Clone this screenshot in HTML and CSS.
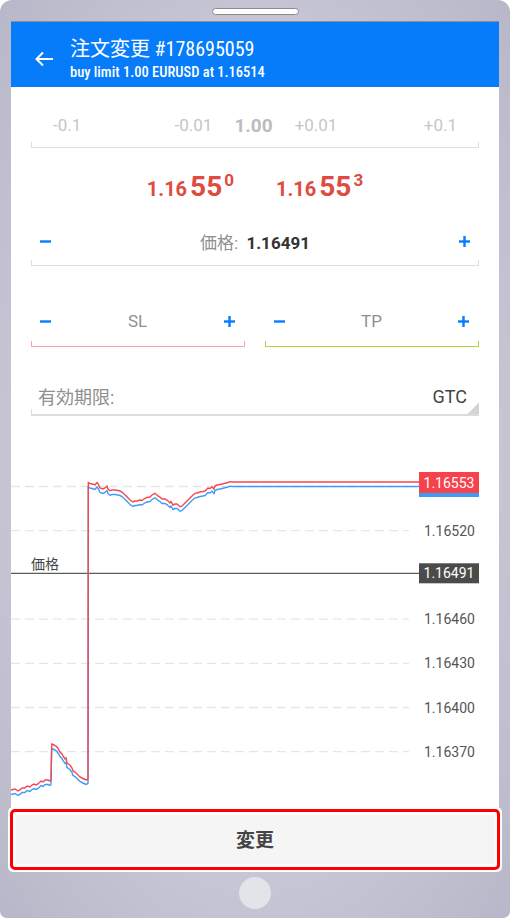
FILE: index.html
```html
<!DOCTYPE html>
<html lang="ja">
<head>
  <meta charset="utf-8">
  <meta name="viewport" content="width=device-width, initial-scale=1">
  <title>注文変更</title>
  <link rel="stylesheet" href="styles.css">
</head>
<body>
<div class="phone">
  <div class="phone__speaker"></div>

  <div class="screen">
    <div class="bar">
      <svg class="bar__back" width="20" height="20" viewBox="0 0 20 20">
        <path d="M19 10H2.5M9 3.5 2.5 10 9 16.5" fill="none" stroke="#fff" stroke-width="2"/>
      </svg>
      <div class="bar__titles">
        <div class="bar__title">注文変更 <span class="bar__num">#178695059</span></div>
        <div class="bar__sub">buy limit 1.00 EURUSD at 1.16514</div>
      </div>
    </div>

    <div class="order">
      <!-- ロット -->
      <div class="field field_lots">
        <span class="lots__step">-0.1</span>
        <div class="lots__mid">
          <span>-0.01</span>
          <b class="lots__value">1.00</b>
          <span>+0.01</span>
        </div>
        <span class="lots__step lots__step_right">+0.1</span>
      </div>

      <!-- bid / ask -->
      <div class="quotes">
        <div class="quote"><span class="quote__head">1.16</span><span class="quote__big">55</span><span class="quote__pip">0</span></div>
        <div class="quote"><span class="quote__head">1.16</span><span class="quote__big">55</span><span class="quote__pip">3</span></div>
      </div>

      <!-- 価格 -->
      <div class="field field_price">
        <svg class="field__btn" width="11" height="11" viewBox="0 0 11 11"><rect x="0" y="4.3" width="11" height="2.4"/></svg>
        <span class="field__label">価格: <b class="field__value">1.16491</b></span>
        <svg class="field__btn" width="11" height="11" viewBox="0 0 11 11"><rect x="0" y="4.3" width="11" height="2.4"/><rect x="4.3" y="0" width="2.4" height="11"/></svg>
      </div>

      <!-- SL / TP -->
      <div class="stops">
        <div class="field field_sl">
          <svg class="field__btn" width="11" height="11" viewBox="0 0 11 11"><rect x="0" y="4.3" width="11" height="2.4"/></svg>
          <span class="field__label">SL</span>
          <svg class="field__btn" width="11" height="11" viewBox="0 0 11 11"><rect x="0" y="4.3" width="11" height="2.4"/><rect x="4.3" y="0" width="2.4" height="11"/></svg>
        </div>
        <div class="field field_tp">
          <svg class="field__btn" width="11" height="11" viewBox="0 0 11 11"><rect x="0" y="4.3" width="11" height="2.4"/></svg>
          <span class="field__label">TP</span>
          <svg class="field__btn" width="11" height="11" viewBox="0 0 11 11"><rect x="0" y="4.3" width="11" height="2.4"/><rect x="4.3" y="0" width="2.4" height="11"/></svg>
        </div>
      </div>

      <!-- 有効期限 -->
      <div class="field field_expiry">
        <span class="expiry__label">有効期限:</span>
        <span class="expiry__value">GTC</span>
      </div>
    </div>

    <div class="chart">
      <svg class="chart__svg" width="488" height="390" viewBox="0 0 488 390">
        <defs>
          <path id="tick" fill="none" d="M0 374 L4 373 7 375 9 374 11 372 14 372 16 370 19 371 21 369 23 368 25 369 27 368 30 365 32 366 34 364 37 364 39 365 40 364 40.7 328 43 329 45 330 46 331 48 334 49 336 51 338 52 340 54 343 55 342 56 347 59 349 61 352 62 355 64 356 66 358 69 361 71 362 73 363 75 364 77 363 77.3 66.7 79 67.5 81 68 84 69 86 66.5 87 67.7 89 72 92 73 94 72 96 70 97 73 99 74.7 101 74 104 74 107 74.5 109 75 111 76 113 78 116 80.7 119 84 122 86 124 85 126 85 129 84 131 84.5 134 82.3 136 81.5 139 81 141 79 144 77.3 147 80 149 81 151 83 154 83 156 84 159 87 160 85.5 162 89 164 88 166 88 169 90.7 171 90 173 88 175 86 177 84 179 82 181 80 184 77.3 186 77 189 76 192 75.5 194 75 197 72 199 72.5 201 70.7 203 73 204 70 206 69 209 68.5 211 68 213 67.5 215 67 217 66.5 219 65.7 222 66 408 66"/>
        </defs>

        <g class="chart__grid">
          <line x1="0" x2="398" y1="70.5" y2="70.5"/>
          <line x1="0" x2="398" y1="114.7" y2="114.7"/>
          <line x1="0" x2="398" y1="203.1" y2="203.1"/>
          <line x1="0" x2="398" y1="247.3" y2="247.3"/>
          <line x1="0" x2="398" y1="291.5" y2="291.5"/>
          <line x1="0" x2="398" y1="335.7" y2="335.7"/>
        </g>

        <g class="chart__axis">
          <text x="413" y="114.7">1.16520</text>
          <text x="413" y="203.1">1.16460</text>
          <text x="413" y="247.3">1.16430</text>
          <text x="413" y="291.5">1.16400</text>
          <text x="413" y="335.7">1.16370</text>
        </g>

        <!-- 指値ライン -->
        <line class="chart__level" x1="0" x2="408" y1="157.4" y2="157.4"/>
        <text class="chart__caption" x="20" y="148">価格</text>

        <use href="#tick" class="chart__bid" transform="translate(0 4.5)"/>
        <use href="#tick" class="chart__ask"/>

        <rect x="408" y="56" width="60" height="21" fill="#f5424b"/>
        <rect x="408" y="77" width="60" height="4" fill="#3f9cf6"/>
        <text class="chart__tag" x="438" y="66.5">1.16553</text>

        <rect x="408" y="147.3" width="60" height="20" fill="#4b4b4b"/>
        <text class="chart__tag" x="438" y="157.3">1.16491</text>
      </svg>
    </div>
  </div>

  <div class="action">
    <button class="action__btn" type="button">変更</button>
  </div>

  <div class="phone__home"></div>
</div>
</body>
</html>
```

FILE: styles.css
```css
body {
    margin: 0;
    background: #fff;
    font-family: Roboto, "Noto Sans CJK JP", sans-serif;
  }
.phone {
    width: 510px;
    height: 918px;
    box-sizing: border-box;
    padding-top: 8px;
    display: flex;
    flex-direction: column;
    align-items: center;
    border-radius: 12px 12px 7px 7px;
    background: radial-gradient(ellipse at 50% 50%, #cbcad8 55%, #b8b7c9 100%);
  }
.phone__speaker {
    width: 85px;
    height: 5px;
    margin-bottom: 6px;
    background: #fdfdfd;
    border: 1px solid #8c8c8c;
    border-radius: 4px;
  }
.screen {
    width: 488px;
    height: 786px;
    box-sizing: border-box;
    background: #fff;
    border-top: 1px solid #8d8c98;
    display: flex;
    flex-direction: column;
  }

/* верхняя панель */
.bar {
    height: 65px;
    flex-shrink: 0;
    display: flex;
    align-items: center;
    padding-left: 23px;
    background: #067cfb;
    color: #fff;
  }
.bar__back {
    margin-right: 16px;
    margin-top: 9px;
  }
.bar__titles {
    align-self: flex-start;
    padding-top: 15px;
  }
.bar__title {
    font-size: 20px;
    line-height: 25px;
    font-stretch: 75%;
  }
.bar__sub {
    font-size: 14.5px;
    line-height: 21px;
    font-weight: 500;
    font-stretch: 75%;
  }

/* форма */
.order {
    flex-shrink: 0;
    padding: 16px 20px 0;
  }
.field {
    display: flex;
    align-items: center;
    border-bottom: 1px solid #dedede;
    background:
      linear-gradient(#dedede, #dedede) left bottom / 1px 5px no-repeat,
      linear-gradient(#dedede, #dedede) right bottom / 1px 5px no-repeat;
  }
.field__btn {
    fill: #087cfb;
    flex-shrink: 0;
  }
.field__label {
    flex: 1;
    text-align: center;
    font-size: 17px;
    color: #8f8f8f;
  }
.field__value {
    margin-left: 4px;
    color: #333;
  }

.field_lots {
    height: 44px;
    padding: 0 22px;
    display: grid;
    grid-template-columns: 1fr auto 1fr;
    align-items: center;
    font-size: 17px;
    color: #c6c6c6;
  }
.lots__step_right {
    text-align: right;
  }
.lots__mid {
    display: flex;
    align-items: center;
    gap: 22px;
    padding-left: 2px;
  }
.lots__value {
    font-size: 19px;
    color: #bcbcbc;
  }

.quotes {
    height: 70px;
    display: flex;
    justify-content: center;
    align-items: center;
    gap: 42px;
    color: #e04a3f;
    font-weight: bold;
  }
.quote {
    line-height: 26px;
    padding-top: 4px;
  }
.quote__head {
    font-size: 20px;
  }
.quote__big {
    font-size: 28px;
    margin-left: 3px;
  }
.quote__pip {
    font-size: 17px;
    margin-left: 2px;
    vertical-align: 10px;
  }

.field_price {
    height: 47px;
    padding: 0 9px;
  }

.stops {
    display: flex;
    gap: 20px;
    margin-top: 30px;
  }
.field_sl,
.field_tp {
    flex: 1;
    height: 50px;
    padding: 0 10px 0 9px;
  }
.field_sl {
    border-bottom-color: #f8a6a6;
    background:
      linear-gradient(#f8a6a6, #f8a6a6) left bottom / 1px 5px no-repeat,
      linear-gradient(#f8a6a6, #f8a6a6) right bottom / 1px 5px no-repeat;
  }
.field_tp {
    border-bottom-color: #a6d23c;
    background:
      linear-gradient(#a6d23c, #a6d23c) left bottom / 1px 5px no-repeat,
      linear-gradient(#a6d23c, #a6d23c) right bottom / 1px 5px no-repeat;
  }

.field_expiry {
    height: 36px;
    margin-top: 31px;
    padding: 0 12px 0 7px;
    justify-content: space-between;
    font-size: 18px;
    border-bottom: 2px solid #dcdcdc;
    background:
      linear-gradient(#dcdcdc, #dcdcdc) left bottom / 1px 5px no-repeat,
      linear-gradient(to top left, #d4d4d4 50%, transparent 50%) right bottom / 11px 12px no-repeat;
  }
.expiry__label {
    color: #8f8f8f;
  }
.expiry__value {
    color: #444;
  }

/* график */
.chart {
    flex: 1;
    overflow: hidden;
  }
.chart__svg {
    display: block;
  }
.chart__grid line {
    stroke: #e6e6e6;
    stroke-width: 1.3;
    stroke-dasharray: 9 5;
  }
.chart__axis text {
    font-size: 14px;
    fill: #555;
    dominant-baseline: central;
  }
.chart__level {
    stroke: #5c5c5c;
    stroke-width: 1.3;
  }
.chart__caption {
    font-size: 14px;
    fill: #444;
    dominant-baseline: central;
  }
.chart__ask {
    stroke: #f5474f;
    stroke-width: 1.4;
  }
.chart__bid {
    stroke: #3f9cf6;
    stroke-width: 1.4;
  }
.chart__tag {
    font-size: 14px;
    fill: #fff;
    text-anchor: middle;
    dominant-baseline: central;
  }

/* кнопка */
.action {
    width: 494px;
    height: 65px;
    box-sizing: border-box;
    padding: 2px;
    background: #fff;
    border-radius: 5px;
  }
.action__btn {
    display: block;
    width: 100%;
    height: 100%;
    border: 3px solid #fe0000;
    border-radius: 5px;
    background: #f5f5f5;
    box-shadow: inset 0 0 0 2.5px #fff;
    font-family: Roboto, "Noto Sans CJK JP", sans-serif;
    font-size: 19px;
    font-weight: bold;
    color: #444;
    padding: 0 0 2px;
  }
.phone__home {
    width: 32px;
    height: 32px;
    margin-top: 5px;
    border-radius: 50%;
    background: #e3e3ea;
  }
```
